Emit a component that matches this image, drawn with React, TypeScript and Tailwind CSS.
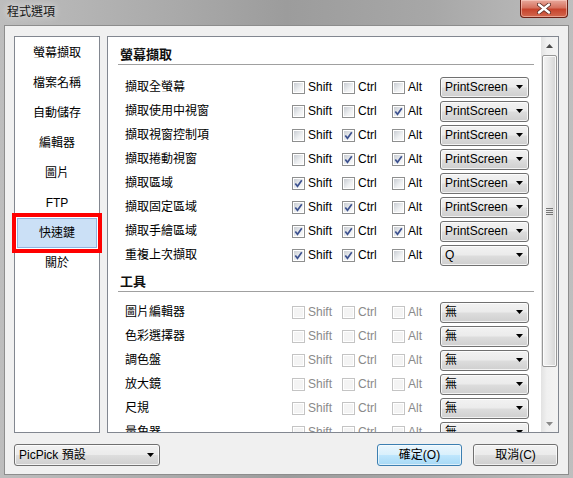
import React from 'react';

type HotkeyRow = {
  label: string;
  shift: boolean;
  ctrl: boolean;
  alt: boolean;
  key: string;
};

const captureRows: HotkeyRow[] = [
  { label: '擷取全螢幕', shift: false, ctrl: false, alt: false, key: 'PrintScreen' },
  { label: '擷取使用中視窗', shift: false, ctrl: false, alt: true, key: 'PrintScreen' },
  { label: '擷取視窗控制項', shift: false, ctrl: true, alt: false, key: 'PrintScreen' },
  { label: '擷取捲動視窗', shift: false, ctrl: true, alt: true, key: 'PrintScreen' },
  { label: '擷取區域', shift: true, ctrl: false, alt: false, key: 'PrintScreen' },
  { label: '擷取固定區域', shift: true, ctrl: true, alt: false, key: 'PrintScreen' },
  { label: '擷取手繪區域', shift: true, ctrl: true, alt: true, key: 'PrintScreen' },
  { label: '重複上次擷取', shift: true, ctrl: true, alt: false, key: 'Q' },
];

const toolRows = ['圖片編輯器', '色彩選擇器', '調色盤', '放大鏡', '尺規', '量角器'];

const navItems = ['螢幕擷取', '檔案名稱', '自動儲存', '編輯器', '圖片', 'FTP', '快速鍵', '關於'];

const CheckBox: React.FC<{ checked?: boolean; disabled?: boolean }> = ({ checked, disabled }) => (
  <span
    className={
      disabled
        ? 'flex h-[13px] w-[13px] shrink-0 border border-[#c4c4c4] bg-white p-[1px]'
        : 'flex h-[13px] w-[13px] shrink-0 border border-[#8e8f8f] bg-white p-[1px]'
    }
  >
    <span
      className={
        disabled
          ? 'flex h-full w-full bg-[#f4f4f4]'
          : 'flex h-full w-full items-center justify-center bg-[linear-gradient(135deg,#c9cdd3_0%,#eef0f2_60%,#fafafa_100%)]'
      }
    >
      {checked && (
        <svg width="9" height="9" viewBox="0 0 9 9">
          <path d="M1.3 4.4 L3.5 7.3 L7.8 1.2" fill="none" stroke="#3d5290" strokeWidth="1.7" />
        </svg>
      )}
    </span>
  </span>
);

const KeyOption: React.FC<{ label: string; checked: boolean; disabled?: boolean; className: string }> = ({
  label,
  checked,
  disabled,
  className,
}) => (
  <div className={`flex items-center gap-[3px] ${className}`}>
    <CheckBox checked={checked} disabled={disabled} />
    <span className={disabled ? 'text-[12px] text-[#8a8a8a]' : 'text-[12px] text-black'}>{label}</span>
  </div>
);

const Combo: React.FC<{ value: string; className: string }> = ({ value, className }) => (
  <div
    className={`flex items-center justify-between rounded-[3px] border border-[#707070] bg-[linear-gradient(#f2f2f2_0%,#ebebeb_48%,#dddddd_52%,#cfcfcf_100%)] pl-[4px] pr-[5px] text-[12px] text-black shadow-[inset_0_0_0_1px_rgba(255,255,255,0.75)] ${className}`}
  >
    <span className="leading-none">{value}</span>
    <svg width="7" height="4" viewBox="0 0 7 4">
      <path d="M0 0H7L3.5 4Z" fill="#000" />
    </svg>
  </div>
);

const HotkeyLine: React.FC<{ row: HotkeyRow; disabled?: boolean }> = ({ row, disabled }) => (
  <div className="flex h-[24px] items-center pl-[7px]">
    <span className="w-[167px] text-[12px] text-black">{row.label}</span>
    <KeyOption label="Shift" checked={row.shift} disabled={disabled} className="w-[50px]" />
    <KeyOption label="Ctrl" checked={row.ctrl} disabled={disabled} className="w-[50px]" />
    <KeyOption label="Alt" checked={row.alt} disabled={disabled} className="w-[48px]" />
    <Combo value={row.key} className="h-[21px] w-[89px]" />
  </div>
);

const ScrollBar: React.FC = () => (
  <div className="flex w-[17px] shrink-0 flex-col bg-[linear-gradient(90deg,#e2e2e2_0%,#f0f0f0_35%,#f3f3f3_100%)]">
    <div className="flex h-[17px] items-center justify-center">
      <svg width="7" height="4" viewBox="0 0 7 4">
        <path d="M0 4H7L3.5 0Z" fill="#4a4a4a" />
      </svg>
    </div>
    <div className="mx-[1px] mt-[1px] flex h-[312px] flex-col items-center justify-center gap-[1px] rounded-[2px] border border-[#979797] bg-[linear-gradient(90deg,#f4f4f4_0%,#e8e8e8_45%,#d5d5d5_100%)] shadow-[inset_0_0_0_1px_rgba(255,255,255,0.8)]">
      <span className="h-px w-[7px] bg-[#767676]" />
      <span className="h-px w-[7px] bg-[#767676]" />
      <span className="h-px w-[7px] bg-[#767676]" />
      <span className="h-px w-[7px] bg-[#767676]" />
    </div>
    <div className="flex-1" />
    <div className="flex h-[17px] items-center justify-center">
      <svg width="7" height="4" viewBox="0 0 7 4">
        <path d="M0 0H7L3.5 4Z" fill="#8a8a8a" />
      </svg>
    </div>
  </div>
);

const SectionTitle: React.FC<{ title: string; className: string }> = ({ title, className }) => (
  <div className={`border-b border-[#a0a0a0] pb-[1px] pl-[2px] text-[13px] font-bold leading-[16px] text-[#111] ${className}`}>
    {title}
  </div>
);

export default function App() {
  return (
    <div className="flex h-[478px] w-[573px] flex-col bg-[linear-gradient(90deg,#bdbdbd_0%,#aaaaaa_30%,#9c9c9c_50%,#a7a7a7_75%,#bebebe_100%)] font-['Liberation_Sans','Noto_Sans_CJK_TC','Noto_Sans_CJK_SC',sans-serif]">
      {/* title bar */}
      <div className="flex h-[25px] items-start justify-between pl-[7px] pr-[5px]">
        <span className="pt-[4px] text-[12px] leading-[16px] text-[#141414] [text-shadow:0_0_7px_rgba(255,255,255,0.95)]">
          程式選項
        </span>
        <div className="flex h-[18px] w-[48px] items-center justify-center rounded-b-[4px] border border-t-0 border-[#6b2016] bg-[linear-gradient(#e9a99c_0%,#d6725f_45%,#c7432c_55%,#d2684f_100%)] shadow-[inset_0_0_0_1px_rgba(255,220,210,0.5)]">
          <svg width="14" height="11" viewBox="0 0 14 11">
            <path d="M2 1.5L12 9.5M12 1.5L2 9.5" stroke="#5a2a22" strokeWidth="4" strokeLinecap="round" />
            <path d="M2 1.5L12 9.5M12 1.5L2 9.5" stroke="#ffffff" strokeWidth="2.4" strokeLinecap="round" />
          </svg>
        </div>
      </div>

      {/* client */}
      <div className="ml-[4px] flex h-[450px] w-[565px] flex-col border border-[#8d8d8d] bg-[#f0f0f0] px-[9px] pt-[10px]">
        <div className="flex gap-[7px]">
          <div className="flex h-[397px] w-[86px] shrink-0 flex-col border border-[#828790] bg-white pt-[1px]">
            {navItems.map((item, i) =>
              i === 6 ? (
                <div
                  key={item}
                  className="mx-[2px] flex h-[30px] items-center justify-center border border-[#8fb4e0] bg-[#cbe0f6] text-[12px] text-black outline-4 outline-solid outline-[#ff0000] outline-offset-[1px]"
                >
                  {item}
                </div>
              ) : (
                <div key={item} className="flex h-[30px] items-center justify-center text-[12px] text-black">
                  {item}
                </div>
              ),
            )}
          </div>

          <div className="flex h-[397px] w-[452px] border border-[#828790] bg-white">
            <div className="flex-1 overflow-hidden pl-[10px] pr-[7px]">
              <SectionTitle title="螢幕擷取" className="pt-[10px]" />
              <div className="mt-[10px] flex flex-col">
                {captureRows.map((row) => (
                  <HotkeyLine key={row.label} row={row} />
                ))}
              </div>
              <SectionTitle title="工具" className="pt-[7px]" />
              <div className="mt-[8px] flex flex-col">
                {toolRows.map((label) => (
                  <HotkeyLine
                    key={label}
                    disabled
                    row={{ label, shift: false, ctrl: false, alt: false, key: '無' }}
                  />
                ))}
              </div>
            </div>
            <ScrollBar />
          </div>
        </div>

        <div className="mt-[11px] flex items-center justify-between pr-[1px]">
          <Combo value="PicPick 預設" className="h-[22px] w-[146px]" />
          <div className="flex gap-[11px]">
            <button className="flex h-[22px] w-[85px] items-center justify-center rounded-[3px] border border-[#3c7fb1] bg-[linear-gradient(#eaf6fd_0%,#d9f0fc_48%,#bee6fd_52%,#a7d9f5_100%)] text-[12px] text-black shadow-[inset_0_0_0_1px_rgba(255,255,255,0.6)]">
              確定(O)
            </button>
            <button className="flex h-[22px] w-[85px] items-center justify-center rounded-[3px] border border-[#707070] bg-[linear-gradient(#f2f2f2_0%,#ebebeb_48%,#dddddd_52%,#cfcfcf_100%)] text-[12px] text-black shadow-[inset_0_0_0_1px_rgba(255,255,255,0.7)]">
              取消(C)
            </button>
          </div>
        </div>
      </div>
    </div>
  );
}
